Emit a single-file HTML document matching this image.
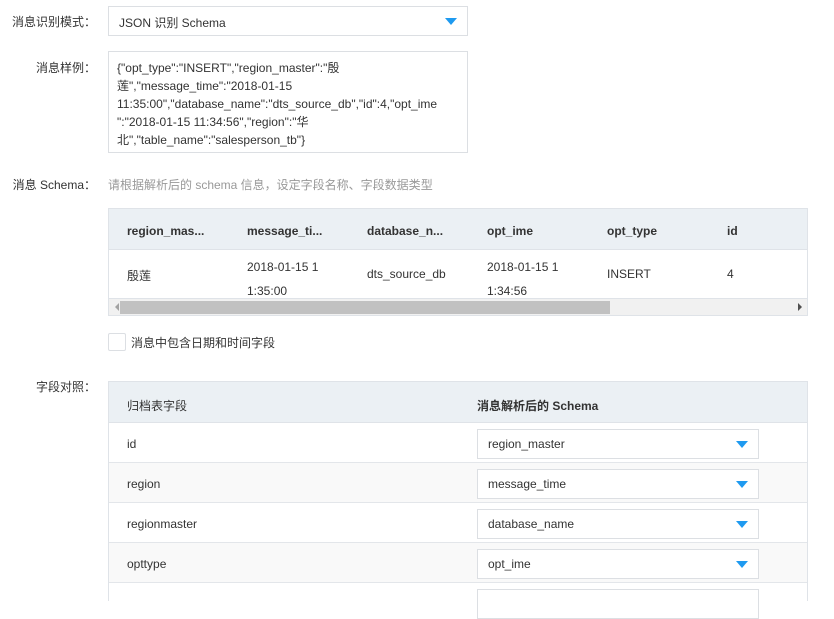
<!DOCTYPE html>
<html><head><meta charset="utf-8"><style>
*{box-sizing:border-box;margin:0;padding:0}
body{width:834px;height:590px;overflow:hidden;background:#fff;font-family:"Liberation Sans","Noto Sans CJK SC",sans-serif;font-size:12px;color:#333;position:relative}
.a{position:absolute}
.lbl{position:absolute;right:738px;white-space:nowrap;color:#333}
.sel{position:absolute;border:1px solid #dcdfe3;background:#fff}
.tri{position:absolute;width:0;height:0;border-left:6px solid transparent;border-right:6px solid transparent;border-top:7px solid #1e9af0}
.th{font-weight:bold;color:#333}
</style></head><body>
<div class="lbl" style="top:13px">消息识别模式：</div>
<div class="sel" style="left:108px;top:6px;width:360px;height:30px"><span class="a" style="left:10px;top:7px">JSON 识别 Schema</span><div class="tri" style="left:336px;top:11px"></div></div>

<div class="lbl" style="top:59px">消息样例：</div>
<div class="sel" style="left:108px;top:51px;width:360px;height:102px;padding:7px 0 0 8px;line-height:18px;word-break:break-all">{"opt_type":"INSERT","region_master":"殷<br>莲","message_time":"2018-01-15<br>11:35:00","database_name":"dts_source_db","id":4,"opt_ime<br>":"2018-01-15 11:34:56","region":"华<br>北","table_name":"salesperson_tb"}</div>

<div class="lbl" style="top:176px">消息 Schema：</div>
<div class="a" style="left:108px;top:176px;color:#999">请根据解析后的 schema 信息，设定字段名称、字段数据类型</div>

<div class="a" style="left:108px;top:208px;width:700px;height:108px;border:1px solid #dfe3e8;background:#fff">
 <div class="a" style="left:0;top:0;width:698px;height:41px;background:#ebf0f4;border-bottom:1px solid #dfe3e8"></div>
 <div class="a th" style="left:18px;top:15px">region_mas...</div>
 <div class="a th" style="left:138px;top:15px">message_ti...</div>
 <div class="a th" style="left:258px;top:15px">database_n...</div>
 <div class="a th" style="left:378px;top:15px">opt_ime</div>
 <div class="a th" style="left:498px;top:15px">opt_type</div>
 <div class="a th" style="left:618px;top:15px">id</div>
 <div class="a" style="left:18px;top:58px">殷莲</div>
 <div class="a" style="left:138px;top:46px;line-height:24px">2018-01-15 1<br>1:35:00</div>
 <div class="a" style="left:258px;top:58px">dts_source_db</div>
 <div class="a" style="left:378px;top:46px;line-height:24px">2018-01-15 1<br>1:34:56</div>
 <div class="a" style="left:498px;top:58px">INSERT</div>
 <div class="a" style="left:618px;top:58px">4</div>
 <div class="a" style="left:0;top:89px;width:698px;height:17px;background:#f1f1f1;border-top:1px solid #dfe3e8"></div>
 <div class="a" style="left:11px;top:92px;width:490px;height:13px;background:#c1c1c1"></div>
 <div class="a" style="left:6px;top:94px;border-right:4px solid #a3a3a3;border-top:4px solid transparent;border-bottom:4px solid transparent"></div>
 <div class="a" style="left:689px;top:94px;border-left:4px solid #505050;border-top:4px solid transparent;border-bottom:4px solid transparent"></div>
</div>

<div class="a" style="left:108px;top:333px;width:18px;height:18px;border:1px solid #dcdfe3;border-radius:2px"></div>
<div class="a" style="left:131px;top:334px">消息中包含日期和时间字段</div>

<div class="lbl" style="top:378px">字段对照：</div>
<div class="a" style="left:108px;top:381px;width:700px;height:220px;border:1px solid #dfe3e8;border-bottom:none">
 <div class="a" style="left:0;top:0;width:698px;height:41px;background:#ebf0f4;border-bottom:1px solid #dfe3e8"></div>
 <div class="a th" style="left:18px;top:15px;font-weight:normal">归档表字段</div>
 <div class="a th" style="left:368px;top:15px">消息解析后的 Schema</div>
 <div class="a" style="left:0;top:41px;width:698px;height:40px;border-bottom:1px solid #e3e6ea"></div>
 <div class="a" style="left:0;top:81px;width:698px;height:40px;background:#f9f9f9;border-bottom:1px solid #e3e6ea"></div>
 <div class="a" style="left:0;top:121px;width:698px;height:40px;border-bottom:1px solid #e3e6ea"></div>
 <div class="a" style="left:0;top:161px;width:698px;height:40px;background:#f9f9f9;border-bottom:1px solid #e3e6ea"></div>
 <div class="a" style="left:18px;top:55px">id</div>
 <div class="a" style="left:18px;top:95px">region</div>
 <div class="a" style="left:18px;top:135px">regionmaster</div>
 <div class="a" style="left:18px;top:175px">opttype</div>
 <div class="sel" style="left:368px;top:47px;width:282px;height:30px"><span class="a" style="left:10px;top:7px">region_master</span><div class="tri" style="left:258px;top:11px"></div></div>
 <div class="sel" style="left:368px;top:87px;width:282px;height:30px"><span class="a" style="left:10px;top:7px">message_time</span><div class="tri" style="left:258px;top:11px"></div></div>
 <div class="sel" style="left:368px;top:127px;width:282px;height:30px"><span class="a" style="left:10px;top:7px">database_name</span><div class="tri" style="left:258px;top:11px"></div></div>
 <div class="sel" style="left:368px;top:167px;width:282px;height:30px"><span class="a" style="left:10px;top:7px">opt_ime</span><div class="tri" style="left:258px;top:11px"></div></div>
 <div class="sel" style="left:368px;top:207px;width:282px;height:30px"></div>
</div>
</body></html>
